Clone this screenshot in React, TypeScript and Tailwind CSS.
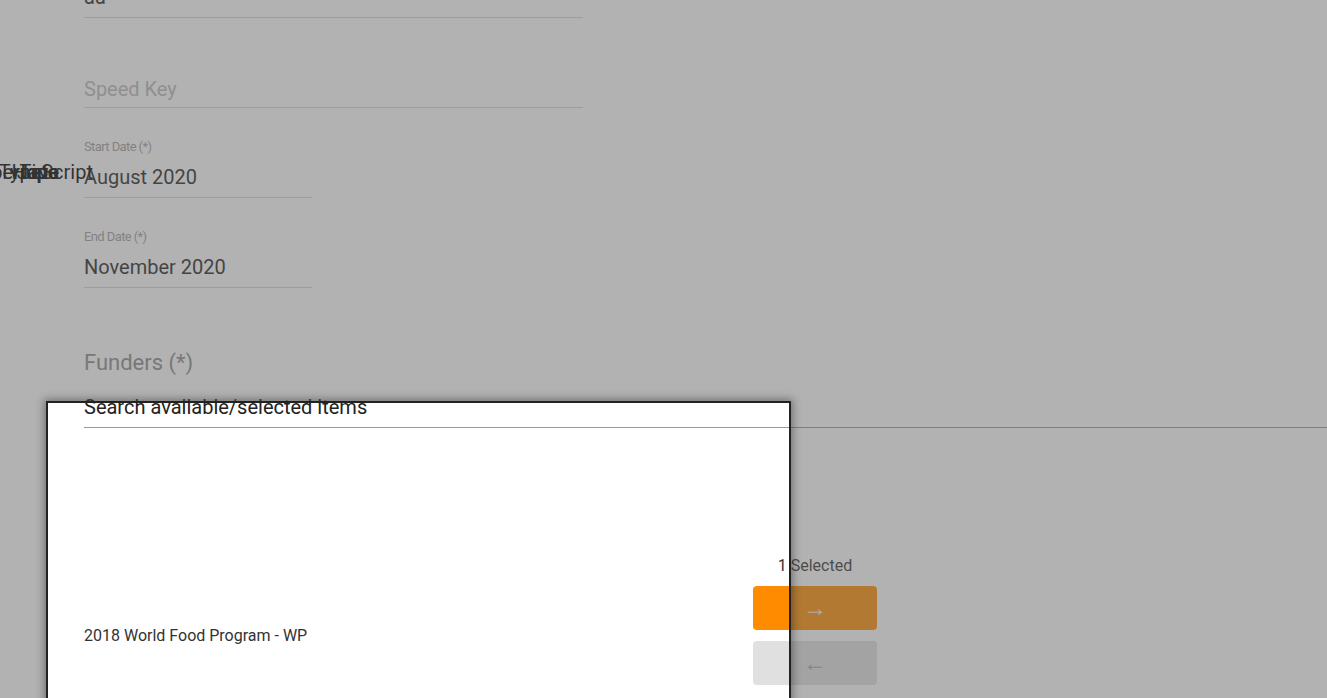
import React from 'react';

const font = { fontFamily: 'Roboto, "Noto Sans", sans-serif' };

interface FieldProps {
  label?: string;
  value?: string;
  placeholder?: string;
  width: string;
}

const Field: React.FC<FieldProps> = ({ label, value, placeholder, width }) => (
  <div className={`h-[90px] flex flex-col justify-end ${width}`}>
    {label && (
      <div className="text-[13px] leading-[14px] tracking-[-0.6px] text-[#9e9e9e] mb-[11px]">{label}</div>
    )}
    <div className="border-b border-[#d2d2d2] pb-[8px] text-[20px] leading-[24px]">
      {value ? (
        <span className="text-[#222]">{value}</span>
      ) : (
        <span className="relative top-[2px] text-[#b8b8b8]">{placeholder}</span>
      )}
    </div>
  </div>
);

// words of a hidden options list that spill out on the left
const strayWords = ['TypeScript', 'Hibernate', 'Java', 'Tipo', 'Hope'];

export default function App() {
  return (
    <div className="relative w-full h-[698px] overflow-hidden bg-white" style={font}>
      {/* Form */}
      <div className="pl-[84px] -mt-[72px]">
        <Field value="aa" width="w-[499px]" />
        <Field placeholder="Speed Key" width="w-[499px]" />
        <Field label="Start Date (*)" value="August 2020" width="w-[228px]" />
        <Field label="End Date (*)" value="November 2020" width="w-[228px]" />

        <div className="mt-[62px] text-[22px] leading-[26px] text-[#8a8a8a]">Funders (*)</div>

        <div className="mt-[19px] border-b border-[#999] pb-[8px] text-[20px] leading-[24px] text-[#222]">
          Search available/selected items
        </div>

        {/* Transfer list */}
        <div className="flex mt-[128px]">
          <div className="w-[669px] pt-[70px]">
            <div className="text-[16px] leading-[20px] text-[#333]">2018 World Food Program - WP</div>
          </div>
          <div className="w-[124px] flex flex-col items-center">
            <div className="text-[16px] leading-[20px] text-[#333] mb-[10px]">1 Selected</div>
            <button className="w-[124px] h-[44px] rounded-[4px] bg-[#ff8c00] text-white/85 text-[24px] leading-none flex items-center justify-center">
              →
            </button>
            <button className="mt-[11px] w-[124px] h-[44px] rounded-[4px] bg-[#e0e0e0] text-[#a6a6a6] text-[24px] leading-none flex items-center justify-center">
              ←
            </button>
          </div>
        </div>
      </div>

      {/* Overflowing option labels */}
      <div className="absolute left-0 top-[160px] h-[24px] w-[93px]">
        {strayWords.map((w, i) => (
          <span
            key={w}
            className={`absolute top-0 text-[20px] leading-[24px] text-black whitespace-nowrap ${i === 0 ? 'right-0' : 'right-[34px]'}`}
          >
            {w}
          </span>
        ))}
      </div>

      {/* Tour highlight with dimmed backdrop */}
      <div className="absolute left-[46px] top-[401px] w-[745px] h-[400px] border-2 border-[#222] pointer-events-none shadow-[0_0_8px_2px_rgba(0,0,0,0.35),0_0_0_9999px_rgba(102,102,102,0.5)]" />
    </div>
  );
}
